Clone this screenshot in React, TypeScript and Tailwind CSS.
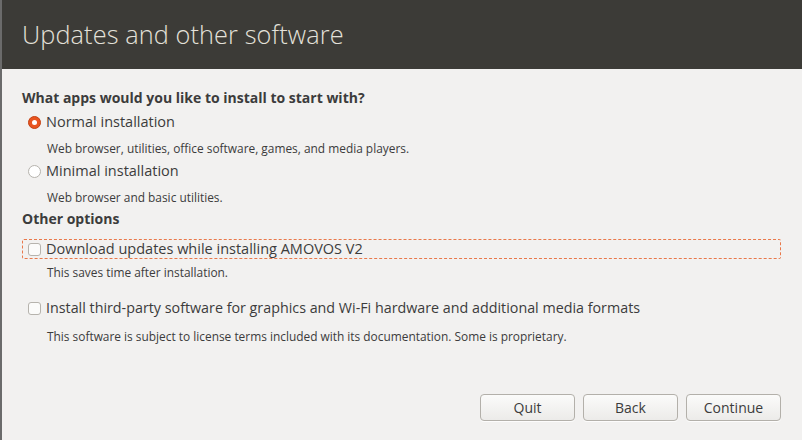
import React, { useState } from 'react';

const font = { fontFamily: '"Open Sans", "Noto Sans", sans-serif' };

const Radio: React.FC<{ checked: boolean }> = ({ checked }) =>
  checked ? (
    <span className="w-[13px] h-[13px] rounded-full bg-[#e95420] border border-[#c34113] flex items-center justify-center shrink-0">
      <span className="w-[5px] h-[5px] rounded-full bg-white" />
    </span>
  ) : (
    <span className="w-[13px] h-[13px] rounded-full bg-white border border-[#b6b3ad] shrink-0" />
  );

const Check: React.FC = () => (
  <span className="w-[13px] h-[13px] rounded-[3px] bg-[#fbfbfa] border border-[#b6b3ad] shrink-0" />
);

const Button: React.FC<{ label: string }> = ({ label }) => (
  <button className="w-[95px] h-[27px] rounded-[4px] border border-[#b3b0aa] bg-gradient-to-b from-[#fbfbfa] to-[#ecebe9] text-[14px] text-[#3c3c3c] shadow-[0_1px_0_rgba(255,255,255,0.8)]">
    {label}
  </button>
);

export default function App() {
  const [mode, setMode] = useState<'normal' | 'minimal'>('normal');

  return (
    <div style={font} className="w-[802px] h-[440px] flex flex-col bg-[#f2f1f0] border-l-2 border-[#6b6b6b] text-[#3c3c3c] overflow-hidden">
      <div className="h-[69px] shrink-0 bg-[#3c3b37] flex items-center pl-[20px]">
        <h1 className="text-[25.3px] font-light text-[#e4e1da] tracking-[0.1px] mt-[1px]">Updates and other software</h1>
      </div>

      <div className="flex-1 flex flex-col pl-[20px] pr-[20px] pt-[19px]">
        <h2 className="text-[14px] font-bold leading-[20px]">What apps would you like to install to start with?</h2>

        <label className="flex items-center gap-[5px] pl-[6px] mt-[4px] h-[20px] cursor-pointer" onClick={() => setMode('normal')}>
          <Radio checked={mode === 'normal'} />
          <span className="text-[14.5px]">Normal installation</span>
        </label>
        <p className="pl-[25px] text-[11.9px] mt-[7px] leading-[18px]">Web browser, utilities, office software, games, and media players.</p>

        <label className="flex items-center gap-[5px] pl-[6px] mt-[4px] h-[20px] cursor-pointer" onClick={() => setMode('minimal')}>
          <Radio checked={mode === 'minimal'} />
          <span className="text-[14.5px]">Minimal installation</span>
        </label>
        <p className="pl-[25px] text-[11.9px] mt-[7px] leading-[18px]">Web browser and basic utilities.</p>

        <h2 className="text-[14px] font-bold leading-[20px] mt-[3px]">Other options</h2>

        <label className="flex items-center gap-[5px] pl-[5px] mt-[10px] h-[20px] border border-dashed border-[#e9784a] rounded-[2px] mr-[1px]">
          <Check />
          <span className="text-[14.5px]">Download updates while installing AMOVOS V2</span>
        </label>
        <p className="pl-[25px] text-[11.9px] mt-[4px] leading-[18px]">This saves time after installation.</p>

        <label className="flex items-center gap-[5px] pl-[6px] mt-[17px] h-[20px]">
          <Check />
          <span className="text-[14.3px]">Install third-party software for graphics and Wi-Fi hardware and additional media formats</span>
        </label>
        <p className="pl-[25px] text-[11.9px] mt-[9px] leading-[18px]">This software is subject to license terms included with its documentation. Some is proprietary.</p>

        <div className="flex-1" />
        <div className="flex justify-end gap-[8px] pr-[1px] mb-[19px]">
          <Button label="Quit" />
          <Button label="Back" />
          <Button label="Continue" />
        </div>
      </div>
    </div>
  );
}
